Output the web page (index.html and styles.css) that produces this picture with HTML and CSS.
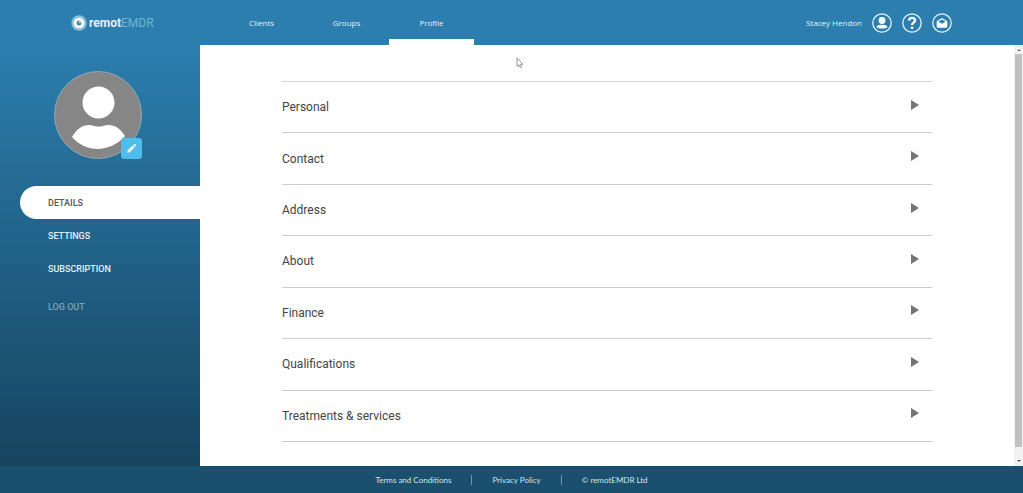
FILE: index.html
```html
<!DOCTYPE html>
<html lang="en">
  <head>
    <meta charset="UTF-8" />
    <meta name="viewport" content="width=device-width, initial-scale=1" />
    <title>remotEMDR - Profile</title>
    <link rel="stylesheet" href="styles.css">
  </head>
  <body>
    <header class="header">
      <a class="logo" href="#">
        <svg width="16" height="16" viewBox="0 0 16 16" aria-hidden="true">
          <circle cx="8" cy="8" r="7.7" fill="#8fc0d9" />
          <circle cx="8" cy="8" r="5.3" fill="#fff" />
          <circle cx="8" cy="8" r="2.5" fill="#4b87a8" />
          <path d="M8 8V5.5A2.5 2.5 0 0 1 10.500 8z" fill="#b9d9e8" />
        </svg>
        <span class="logo-text">remot<span class="logo-light">EMDR</span></span>
      </a>

      <nav class="top-nav">
        <a href="#">Clients</a>
        <a href="#">Groups</a>
        <a class="active" href="#">Profile</a>
      </nav>

      <div class="user">
        <span class="user-name">Stacey Hendon</span>
        <button class="icon-btn" type="button" aria-label="Account">
          <svg width="20" height="20" viewBox="0 0 20 20">
            <circle cx="10" cy="10" r="9.200" />
            <circle class="solid" cx="10" cy="7.500" r="3.400" />
            <path class="solid" d="M4.500 14c1-2 3-2.500 5.500-2 2.500-.5 4.500 0 5.500 2-1.500 2-9.500 2-11 0z" />
          </svg>
        </button>
        <button class="icon-btn" type="button" aria-label="Help">
          <svg width="20" height="20" viewBox="0 0 20 20">
            <circle cx="10" cy="10" r="9.200" />
            <path class="mark" d="M7 7.600C7.200 3.900 13 4.100 13 7.400c0 2.200-2.900 2.200-2.900 4.500" />
            <circle class="solid" cx="10.100" cy="14.800" r="1.400" />
          </svg>
        </button>
        <button class="icon-btn" type="button" aria-label="Messages">
          <svg width="20" height="20" viewBox="0 0 20 20">
            <circle cx="10" cy="10" r="9.200" />
            <path class="solid" d="M4.700 8.300 10 4.900l5.300 3.400V13.500q0 1.200-1.200 1.200H5.900q-1.200 0-1.200-1.200z" />
            <path class="flap" d="M6.300 8.500 10 6.500l3.700 2L10 10.800z" />
          </svg>
        </button>
      </div>
    </header>

    <div class="page">
      <aside class="sidebar">
        <div class="avatar">
          <svg width="88" height="88" viewBox="0 0 88 88" role="img" aria-label="Profile picture">
            <circle cx="44" cy="44" r="43.500" fill="#868686" stroke="#8fa9b7" />
            <circle cx="44.500" cy="31.500" r="16" fill="#fff" />
            <path d="M18 66C24 55 33 52 40 55q4.500 1.200 9 0C57 52 65 55 71 65 56 82 32 82 18 66z" fill="#fff" />
          </svg>
          <button class="edit-btn" type="button" aria-label="Edit picture">
            <svg width="11" height="11" viewBox="0 0 11 11">
              <path d="M1.200 9.800l.6-2.500L6.700 2.400l1.900 1.900-4.900 4.900zM7.300 1.800l.7-.7q.5-.4 1 0l.9.900q.4.500 0 1l-.7.700z" fill="#fff" />
            </svg>
          </button>
        </div>

        <nav class="side-nav">
          <a class="active" href="#">DETAILS</a>
          <a href="#">SETTINGS</a>
          <a href="#">SUBSCRIPTION</a>
          <a class="logout" href="#">LOG OUT</a>
        </nav>
      </aside>

      <main class="content">
        <div class="accordion">
          <button class="row" type="button" aria-expanded="false">Personal<span class="arrow"></span></button>
          <button class="row" type="button" aria-expanded="false">Contact<span class="arrow"></span></button>
          <button class="row" type="button" aria-expanded="false">Address<span class="arrow"></span></button>
          <button class="row" type="button" aria-expanded="false">About<span class="arrow"></span></button>
          <button class="row" type="button" aria-expanded="false">Finance<span class="arrow"></span></button>
          <button class="row" type="button" aria-expanded="false">Qualifications<span class="arrow"></span></button>
          <button class="row" type="button" aria-expanded="false">Treatments &amp; services<span class="arrow"></span></button>
        </div>
      </main>

      <div class="scrollbar" aria-hidden="true">
        <span class="scroll-up"></span>
        <span class="scroll-thumb"></span>
        <span class="scroll-down"></span>
      </div>
    </div>

    <footer class="footer">
      <a href="#">Terms and Conditions</a>
      <a href="#">Privacy Policy</a>
      <span>© remotEMDR Ltd</span>
    </footer>

    <svg class="pointer" width="8" height="12" viewBox="0 0 8 12" aria-hidden="true">
      <path d="M1 1v8.500l2-1.800 1.300 3 1.400-.6-1.300-2.900H7z" fill="#fff" stroke="#8a8a8a" stroke-width="0.900" />
    </svg>
  </body>
</html>
```
FILE: styles.css
```css
* {
  box-sizing: border-box;
}

body {
  margin: 0;
  min-height: 100vh;
  display: flex;
  flex-direction: column;
  font-family: Roboto, sans-serif;
  background-color: #fff;
  color: #444;
}

a {
  color: inherit;
  text-decoration: none;
}

button {
  margin: 0;
  padding: 0;
  border: none;
  background: none;
  font: inherit;
  color: inherit;
  cursor: pointer;
}

svg {
  display: block;
}

/* header */
.header {
  display: flex;
  align-items: center;
  height: 45px;
  padding-right: 71px;
  background-color: #2b7eae;
  color: #e3f1f8;
  font-family: "Open Sans", sans-serif;
  font-size: 8px;
}

.logo {
  display: flex;
  align-items: center;
  gap: 2px;
  width: 219px;
  padding-left: 71px;
}

.logo-text {
  font-family: Roboto, sans-serif;
  font-size: 12px;
  font-weight: 700;
}

.logo-light {
  color: #72b4d3;
  font-weight: 400;
}

.top-nav {
  display: flex;
  align-self: stretch;
}

.top-nav a {
  display: flex;
  align-items: center;
  justify-content: center;
  width: 85px;
  border-top: 6px solid transparent;
  border-bottom: 6px solid transparent;
}

.top-nav a.active {
  border-bottom-color: #fff;
}

.user {
  display: flex;
  align-items: center;
  gap: 10px;
  margin-left: auto;
}

.icon-btn svg {
  fill: none;
  stroke: #e3f1f8;
  stroke-width: 1.3;
}

.icon-btn .solid {
  fill: #fff;
  stroke: none;
}

.icon-btn .mark {
  stroke: #fff;
  stroke-width: 2.4;
}

.icon-btn .flap {
  fill: #2b7eae;
  stroke: none;
}

/* body of the page */
.page {
  flex: 1;
  display: flex;
}

.sidebar {
  width: 200px;
  padding: 26px 0 26px 20px;
  background: linear-gradient(#2b7eae, #16445f);
}

.avatar {
  position: relative;
  width: 88px;
  margin-left: 34px;
}

.edit-btn {
  position: absolute;
  right: 0;
  bottom: 0;
  display: flex;
  align-items: center;
  justify-content: center;
  width: 21px;
  height: 21px;
  border-radius: 3px;
  background-color: #4fbdec;
}

.side-nav {
  display: flex;
  flex-direction: column;
  margin-top: 27px;
  font-size: 9px;
  font-weight: 500;
  color: #e6f0f5;
}

.side-nav a {
  padding: 1px 0 0 28px;
  line-height: 32px;
}

.side-nav a.active {
  border-radius: 17px 0 0 17px;
  background-color: #fff;
  color: #555;
}

.side-nav a.logout {
  margin-top: 5px;
  color: #7ba3b9;
}

.content {
  flex: 1;
  display: flex;
  justify-content: center;
  padding: 36px 20px 24px;
}

.accordion {
  flex: 1;
  display: flex;
  flex-direction: column;
  max-width: 650px;
  border-top: 1px solid #d4d4d4;
}

.row {
  flex: 1;
  display: flex;
  align-items: center;
  justify-content: space-between;
  min-height: 50px;
  padding-right: 13px;
  border-bottom: 1px solid #cbcbcb;
  font-size: 12px;
  text-align: left;
}

.arrow {
  margin-bottom: 5px;
  border-left: 8px solid #747474;
  border-top: 5px solid transparent;
  border-bottom: 5px solid transparent;
}

/* scrollbar */
.scrollbar {
  display: flex;
  flex-direction: column;
  align-items: center;
  justify-content: space-between;
  width: 9px;
  padding: 4px 0;
  background-color: #f1f1f1;
}

.scroll-up,
.scroll-down {
  border-left: 2px solid transparent;
  border-right: 2px solid transparent;
}

.scroll-up {
  border-bottom: 2px solid #777;
}

.scroll-down {
  border-top: 2px solid #555;
}

.scroll-thumb {
  flex: 1;
  width: 7px;
  margin: 3px 0 13px;
  background-color: #c1c1c1;
}

/* footer */
.footer {
  display: flex;
  align-items: center;
  justify-content: center;
  height: 27px;
  background-color: #1a506e;
  color: #d5e3ea;
  font-family: Lato, sans-serif;
  font-size: 8px;
}

.footer > * {
  padding: 0 20px;
  line-height: 10px;
}

.footer > * + * {
  border-left: 1px solid #7997a8;
}

.pointer {
  position: absolute;
  left: 516px;
  top: 57px;
}
```
